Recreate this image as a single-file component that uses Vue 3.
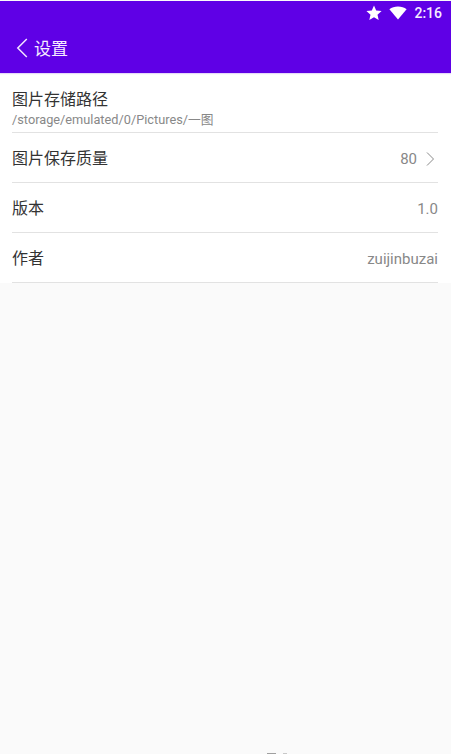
<script setup>
const rows = [
  { title: '图片保存质量', value: '80', arrow: true },
  { title: '版本', value: '1.0' },
  { title: '作者', value: 'zuijinbuzai' }
]
</script>

<template>
  <div class="page">
    <header class="app-bar">
      <div class="status-bar">
        <svg class="star" viewBox="0 0 16 16" width="16" height="16">
          <path d="M8 .6l2.2 5 5.4.5-4.1 3.6 1.2 5.300L8 12.200 3.300 15l1.200-5.300L.4 6.100l5.400-.5z" fill="#fff" />
        </svg>
        <svg class="wifi" viewBox="0 0 18 14" width="18" height="14">
          <path d="M9 13.500L.4 3.200C2.700 1.300 5.700.4 9 .4s6.300.9 8.600 2.800z" fill="#fff" />
        </svg>
        <span class="clock">2:16</span>
      </div>
      <div class="toolbar">
        <svg class="back" viewBox="0 0 12 20" width="12" height="20">
          <path d="M10.800 1L1.800 10l9 9" fill="none" stroke="#f3e4ff" stroke-width="1.500" />
        </svg>
        <span class="toolbar-title">设置</span>
      </div>
    </header>

    <div class="list">
      <div class="path-row">
        <div class="row-title">图片存储路径</div>
        <div class="path-text">/storage/emulated/0/Pictures/一图</div>
      </div>
      <div v-for="row in rows" :key="row.title" class="row">
        <span class="row-title">{{ row.title }}</span>
        <span class="row-value">{{ row.value }}</span>
        <svg v-if="row.arrow" class="arrow" viewBox="0 0 10 16" width="10" height="16">
          <path d="M2 1.500L8.500 8 2 14.500" fill="none" stroke="#8a8a8a" stroke-width="1" />
        </svg>
      </div>
    </div>

    <span class="edge-mark edge-mark-left"></span>
    <span class="edge-mark edge-mark-right"></span>
  </div>
</template>

<style>
html, body {
  margin: 0;
  background: #fafafa;
}
</style>

<style scoped>
.page {
  position: relative;
  height: 754px;
  overflow: hidden;
  background: #fafafa;
  font-family: Roboto, "Noto Sans CJK SC", sans-serif;
}

.app-bar {
  height: 72px;
  margin-top: 1px;
  background: #5f00e6;
  border-bottom: 1px solid #e6d8fb;
}

.status-bar {
  height: 24px;
  display: flex;
  align-items: center;
  justify-content: flex-end;
  padding-right: 9px;
  color: #f6ecff;
}

.wifi {
  margin-left: 7px;
}

.clock {
  margin-left: 7px;
  font-size: 14px;
  font-weight: 500;
}

.toolbar {
  height: 45px;
  display: flex;
  align-items: center;
  padding-left: 16px;
}

.toolbar-title {
  margin-left: 6px;
  font-size: 17px;
  color: #f6ecff;
}

.list {
  background: #fff;
  padding: 0 13px 0 12px;
  margin-top: 1px;
}

.path-row {
  height: 58px;
  box-sizing: border-box;
  padding-top: 15px;
  border-bottom: 1px solid #e2e2e2;
}

.row {
  height: 50px;
  box-sizing: border-box;
  padding-top: 2px;
  display: flex;
  align-items: center;
  border-bottom: 1px solid #e2e2e2;
}

.row-title {
  font-size: 16px;
  line-height: 20px;
  color: #333;
}

.path-text {
  margin-top: 2px;
  font-size: 12.75px;
  line-height: 16px;
  color: #888;
}

.row-value {
  margin-left: auto;
  font-size: 15px;
  color: #888;
}

.arrow {
  margin-left: 8px;
  margin-right: 3px;
}

.edge-mark {
  position: absolute;
  bottom: 0;
  height: 1px;
  background: #a0a0a0;
}

.edge-mark-left {
  left: 267px;
  width: 9px;
}

.edge-mark-right {
  left: 283px;
  width: 4px;
  background: #c8c8c8;
}
</style>
